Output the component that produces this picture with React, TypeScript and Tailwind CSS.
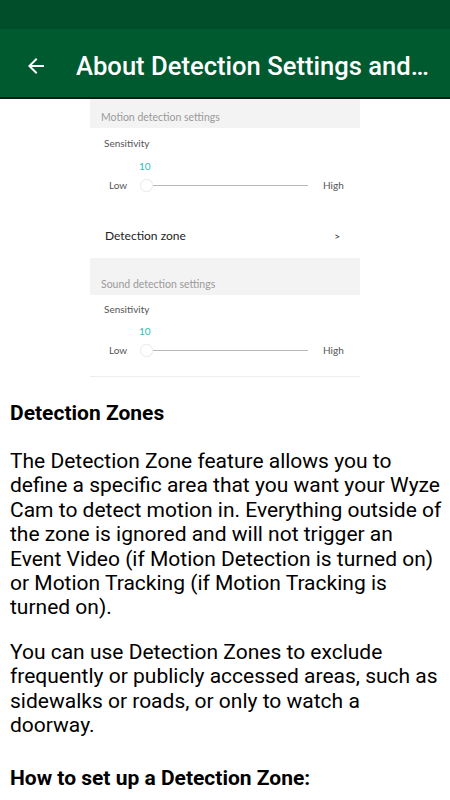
import React from 'react';

function ArrowBack() {
  return (
    <svg viewBox="0 0 24 24" className="w-6 h-6" fill="white">
      <path d="M20 11H7.83l5.59-5.59L12 4l-8 8 8 8 1.41-1.41L7.83 13H20v-2z" />
    </svg>
  );
}

function SliderRow() {
  return (
    <div className="px-[14px]">
      <div className="pl-[35px] text-[10px] leading-[12px] text-[#2cc0b0]">10</div>
      <div className="flex items-center mt-[6px] text-[10px] leading-[12px] text-[#555]">
        <span className="w-[36px] pl-[5px]">Low</span>
        <div className="relative flex-1 h-[14px] flex items-center">
          <div className="w-[13px] h-[13px] rounded-full border border-[#eeeeee] bg-white shadow-[0_0_1px_rgba(0,0,0,0.08)]" />
          <div className="flex-1 h-px bg-[#b8b8b8]" />
        </div>
        <span className="w-[38px] pl-[15px]">High</span>
      </div>
    </div>
  );
}

function SettingsShot() {
  return (
    <div className="w-[270px] mx-auto bg-white font-['Lato',sans-serif] border-b border-[#eeeeee]">
      <div className="h-[29px] bg-[#f3f3f3] flex items-end pb-[5px] pl-[11px] text-[10.5px] leading-[12px] text-[#9a9a9a]">
        Motion detection settings
      </div>
      <div className="pl-[14px] pt-[9px] text-[10px] leading-[12px] text-[#555]">Sensitivity</div>
      <div className="mt-[11px]">
        <SliderRow />
      </div>
      <div className="flex items-center justify-between pl-[15px] pr-[20px] mt-[37px] text-[12px] leading-[14px] text-[#222]">
        <span>Detection zone</span>
        <span className="text-[10px]">&gt;</span>
      </div>
      <div className="mt-[15px] h-[37px] bg-[#f3f3f3] flex items-end pb-[5px] pl-[11px] text-[10.5px] leading-[12px] text-[#9a9a9a]">
        Sound detection settings
      </div>
      <div className="pl-[14px] pt-[8px] text-[10px] leading-[12px] text-[#555]">Sensitivity</div>
      <div className="mt-[10px] pb-[19px]">
        <SliderRow />
      </div>
    </div>
  );
}

export default function App() {
  return (
    <div className="w-[450px] h-[800px] overflow-hidden bg-white font-['Roboto',sans-serif]">
      {/* status bar */}
      <div className="h-[29px] bg-[#004e2a]" />
      {/* app bar */}
      <div className="h-[70px] bg-[#005a30] flex items-center pt-[5px] border-b-2 border-[#0b1a12]">
        <div className="w-[76px] pl-[24px] flex items-center">
          <ArrowBack />
        </div>
        <h1 className="flex-1 whitespace-nowrap text-white text-[25.6px] font-medium leading-[30px]">
          About Detection Settings and…
        </h1>
      </div>

      <SettingsShot />

      <div className="pl-[10px] pr-[6px] text-black">
        <h2 className="mt-[24px] text-[21px] leading-[24px] font-bold">Detection Zones</h2>
        <p className="mt-[24px] text-[21px] leading-[24.4px]">
          The Detection Zone feature allows you to define a specific area that you want your Wyze Cam to detect motion in. Everything outside of the zone is ignored and will not trigger an Event Video (if Motion Detection is turned on) or Motion Tracking (if Motion Tracking is turned on).
        </p>
        <p className="mt-[20px] text-[21px] leading-[24.4px]">
          You can use Detection Zones to exclude frequently or publicly accessed areas, such as sidewalks or roads, or only to watch a doorway.
        </p>
        <h2 className="mt-[29px] text-[21px] leading-[24px] font-bold">How to set up a Detection Zone:</h2>
      </div>
    </div>
  );
}
